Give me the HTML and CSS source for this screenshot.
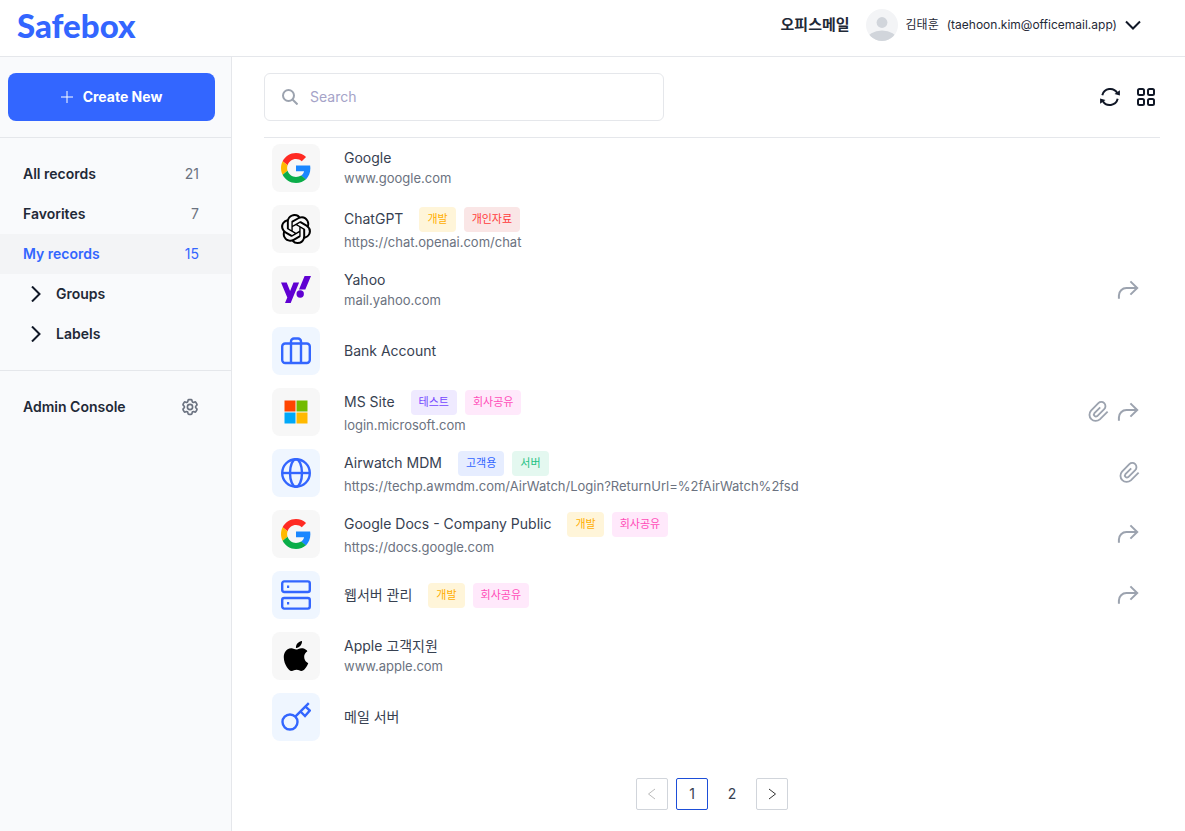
FILE: index.html
```html
<!DOCTYPE html>
<html lang="ko">
<head>
    <meta charset="UTF-8">
    <meta name="viewport" content="width=device-width, initial-scale=1.0">
    <title>Safebox</title>
    <link rel="stylesheet" href="styles.css">
</head>
<body>
    <!-- shared icons -->
    <svg class="sprite" aria-hidden="true">
        <symbol id="google" viewBox="0 0 48 48">
            <path fill="#ff2a23" d="M24 9.5c3.54 0 6.71 1.22 9.21 3.6l6.85-6.85C35.9 2.38 30.47 0 24 0 14.62 0 6.51 5.38 2.56 13.22l7.98 6.19C12.43 13.72 17.74 9.5 24 9.5z"/>
            <path fill="#1a87ff" d="M46.98 24.55c0-1.57-.15-3.09-.38-4.55H24v9.02h12.94c-.58 2.96-2.26 5.48-4.78 7.18l7.73 6c4.51-4.18 7.09-10.36 7.09-17.65z"/>
            <path fill="#ffb900" d="M10.53 28.59c-.48-1.45-.76-2.99-.76-4.59s.27-3.14.76-4.59l-7.98-6.19C.92 16.46 0 20.12 0 24c0 3.88.92 7.54 2.56 10.78l7.97-6.19z"/>
            <path fill="#0aad49" d="M24 48c6.48 0 11.93-2.13 15.89-5.81l-7.73-6c-2.15 1.45-4.92 2.3-8.16 2.3-6.26 0-11.57-4.22-13.47-9.91l-7.98 6.19C6.51 42.62 14.62 48 24 48z"/>
        </symbol>
        <symbol id="share" viewBox="0 0 24 24">
            <path class="line" d="M2.9 20.8v-3.3a7.5 7.5 0 0 1 7.5-7.5H21M14.4 3.4 21.2 10l-6.8 6.6"/>
        </symbol>
        <symbol id="clip" viewBox="0 0 24 24">
            <path class="line" d="M22.5 11.5 14 20a6.8 6.8 0 0 1-9.6-9.6l8-8a4.5 4.5 0 0 1 6.4 6.4l-7.6 7.6a2.2 2.2 0 0 1-3.1-3.1l6.3-6.3"/>
        </symbol>
    </svg>

    <header class="header">
        <a class="logo" href="#">Safebox</a>
        <div class="account">
            <span class="company">오피스메일</span>
            <button class="user" type="button">
                <svg class="avatar" viewBox="0 0 32 32">
                    <clipPath id="face"><circle cx="16" cy="16" r="16"/></clipPath>
                    <g clip-path="url(#face)">
                        <rect width="32" height="32" fill="#f3f4f6"/>
                        <circle cx="16" cy="13.5" r="5.4" fill="#d1d5db"/>
                        <ellipse cx="16" cy="31" rx="15" ry="9.5" fill="#d1d5db"/>
                    </g>
                </svg>
                <span>김태훈</span>
                <span class="email">(taehoon.kim@officemail.app)</span>
                <svg class="chevron" viewBox="0 0 16 16"><path d="M1 4.5l7 7 7-7"/></svg>
            </button>
        </div>
    </header>

    <div class="layout">
        <aside class="sidebar">
            <div class="create">
                <button class="create-btn" type="button">
                    <svg viewBox="0 0 12 12"><path d="M6 0v12M0 6h12"/></svg>
                    Create New
                </button>
            </div>
            <nav class="menu">
                <a href="#">All records <span class="count">21</span></a>
                <a href="#">Favorites <span class="count">7</span></a>
                <a href="#" class="active">My records <span class="count">15</span></a>
                <a href="#" class="fold"><svg viewBox="0 0 16 16"><path d="M4 .5 11.5 8 4 15.5"/></svg>Groups</a>
                <a href="#" class="fold"><svg viewBox="0 0 16 16"><path d="M4 .5 11.5 8 4 15.5"/></svg>Labels</a>
            </nav>
            <nav class="menu admin">
                <a href="#">Admin Console
                    <svg class="gear" viewBox="1 1 22 22">
                        <path d="M9.594 3.94c.09-.542.56-.94 1.11-.94h2.593c.55 0 1.02.398 1.11.94l.213 1.281c.063.374.313.686.645.87.074.04.147.083.22.127.324.196.72.257 1.075.124l1.217-.456a1.125 1.125 0 011.37.49l1.296 2.247a1.125 1.125 0 01-.26 1.431l-1.003.827c-.293.24-.438.613-.431.992a6.759 6.759 0 010 .255c-.007.378.138.75.43.99l1.005.828c.424.35.534.954.26 1.43l-1.298 2.247a1.125 1.125 0 01-1.369.491l-1.217-.456c-.355-.133-.75-.072-1.076.124a6.57 6.57 0 01-.22.128c-.331.183-.581.495-.644.869l-.213 1.28c-.09.543-.56.941-1.11.941h-2.594c-.55 0-1.02-.398-1.11-.94l-.213-1.281c-.062-.374-.312-.686-.644-.87a6.52 6.52 0 01-.22-.127c-.325-.196-.72-.257-1.076-.124l-1.217.456a1.125 1.125 0 01-1.369-.49l-1.297-2.247a1.125 1.125 0 01.26-1.431l1.004-.827c.292-.24.437-.613.43-.992a6.932 6.932 0 010-.255c.007-.378-.138-.75-.43-.99l-1.004-.828a1.125 1.125 0 01-.26-1.43l1.297-2.247a1.125 1.125 0 011.37-.491l1.216.456c.356.133.751.072 1.076-.124.072-.044.146-.087.22-.128.332-.183.582-.495.644-.869l.214-1.281z"/>
                        <circle cx="12" cy="12" r="3.2"/>
                    </svg>
                </a>
            </nav>
        </aside>

        <main class="main">
            <div class="toolbar">
                <label class="search">
                    <svg viewBox="0 0 16 16"><circle cx="6.5" cy="6.5" r="5.5"/><path d="M10.5 10.5l5 5"/></svg>
                    <input type="text" placeholder="Search" aria-label="Search">
                </label>
                <div class="tools">
                    <button type="button" aria-label="Refresh">
                        <svg viewBox="0 0 20 20">
                            <path class="line" d="M2.3 8.2A8.2 8.2 0 0 1 17.3 6M17.7 11.8A8.2 8.2 0 0 1 2.7 14"/>
                            <path d="M19.9 3.2v5.4l-5.4-1.5zM.1 16.8v-5.4l5.4 1.5z"/>
                        </svg>
                    </button>
                    <button type="button" aria-label="Grid view">
                        <svg viewBox="0 0 20 20">
                            <g class="line">
                                <rect x="2" y="2" width="6" height="6" rx="1.5"/><rect x="12" y="2" width="6" height="6" rx="1.5"/>
                                <rect x="2" y="12" width="6" height="6" rx="1.5"/><rect x="12" y="12" width="6" height="6" rx="1.5"/>
                            </g>
                        </svg>
                    </button>
                </div>
            </div>

            <ul class="records">
                <li>
                    <span class="tile"><svg><use href="#google"/></svg></span>
                    <div class="info">
                        <div class="title">Google</div>
                        <div class="url">www.google.com</div>
                    </div>
                </li>
                <li>
                    <span class="tile">
                        <svg viewBox="0 0 24 24"><path d="M22.2819 9.8211a5.9847 5.9847 0 0 0-.5157-4.9108 6.0462 6.0462 0 0 0-6.5098-2.9A6.0651 6.0651 0 0 0 4.9807 4.1818a5.9847 5.9847 0 0 0-3.9977 2.9 6.0462 6.0462 0 0 0 .7427 7.0966 5.98 5.98 0 0 0 .511 4.9107 6.051 6.051 0 0 0 6.5146 2.9001A5.9847 5.9847 0 0 0 13.2599 24a6.0557 6.0557 0 0 0 5.7718-4.2058 5.9894 5.9894 0 0 0 3.9977-2.9001 6.0557 6.0557 0 0 0-.7475-7.0729zm-9.022 12.6081a4.4755 4.4755 0 0 1-2.8764-1.0408l.1419-.0804 4.7783-2.7582a.7948.7948 0 0 0 .3927-.6813v-6.7369l2.02 1.1686a.071.071 0 0 1 .038.052v5.5826a4.504 4.504 0 0 1-4.4945 4.4944zm-9.6607-4.1254a4.4708 4.4708 0 0 1-.5346-3.0137l.142.0852 4.783 2.7582a.7712.7712 0 0 0 .7806 0l5.8428-3.3685v2.3324a.0804.0804 0 0 1-.0332.0615L9.74 19.9502a4.4992 4.4992 0 0 1-6.1408-1.6464zM2.3408 7.8956a4.485 4.485 0 0 1 2.3655-1.9728V11.6a.7664.7664 0 0 0 .3879.6765l5.8144 3.3543-2.0201 1.1685a.0757.0757 0 0 1-.071 0l-4.8303-2.7865A4.504 4.504 0 0 1 2.3408 7.872zm16.5963 3.8558L13.1038 8.364 15.1192 7.2a.0757.0757 0 0 1 .071 0l4.8303 2.7913a4.4944 4.4944 0 0 1-.6765 8.1042v-5.6772a.79.79 0 0 0-.407-.667zm2.0107-3.0231l-.142-.0852-4.7735-2.7818a.7759.7759 0 0 0-.7854 0L9.409 9.2297V6.8974a.0662.0662 0 0 1 .0284-.0615l4.8303-2.7866a4.4992 4.4992 0 0 1 6.6802 4.66zM8.3065 12.863l-2.02-1.1638a.0804.0804 0 0 1-.038-.0567V6.0742a4.4992 4.4992 0 0 1 7.3757-3.4537l-.142.0805L8.704 5.459a.7948.7948 0 0 0-.3927.6813zm1.0976-2.3654l2.602-1.4998 2.6069 1.4998v2.9994l-2.5974 1.4997-2.6067-1.4997Z"/></svg>
                    </span>
                    <div class="info">
                        <div class="title">ChatGPT <span class="tags"><span class="tag yellow">개발</span><span class="tag red">개인자료</span></span></div>
                        <div class="url">https://chat.openai.com/chat</div>
                    </div>
                </li>
                <li>
                    <span class="tile">
                        <svg viewBox="0 0 30 30" fill="#6001d2"><path d="M0 7.5h5.7l3.4 8.6 3.4-8.6h5.6L9.7 28H4l2.3-5.5zM23.6 1H30l-5.7 13.6h-6.3z"/><circle cx="19.2" cy="19" r="3.7"/></svg>
                    </span>
                    <div class="info">
                        <div class="title">Yahoo</div>
                        <div class="url">mail.yahoo.com</div>
                    </div>
                    <div class="marks"><svg class="share"><use href="#share"/></svg></div>
                </li>
                <li>
                    <span class="tile blue">
                        <svg viewBox="0 0 30 30"><rect x="1.2" y="7.5" width="27.6" height="19.5" rx="3"/><path d="M10 27V5.5a3 3 0 0 1 3-3h4a3 3 0 0 1 3 3V27"/></svg>
                    </span>
                    <div class="info">
                        <div class="title">Bank Account</div>
                    </div>
                </li>
                <li>
                    <span class="tile">
                        <svg viewBox="0 0 30 30"><path fill="#ff4500" d="M3.5 3.5h11v11h-11z"/><path fill="#72bb00" d="M15.5 3.5h11v11h-11z"/><path fill="#00a8f8" d="M3.5 15.5h11v11h-11z"/><path fill="#ffb900" d="M15.5 15.5h11v11h-11z"/></svg>
                    </span>
                    <div class="info">
                        <div class="title">MS Site <span class="tags"><span class="tag purple">테스트</span><span class="tag pink">회사공유</span></span></div>
                        <div class="url">login.microsoft.com</div>
                    </div>
                    <div class="marks"><svg class="clip"><use href="#clip"/></svg><svg class="share"><use href="#share"/></svg></div>
                </li>
                <li>
                    <span class="tile blue">
                        <svg viewBox="0 0 30 30"><circle cx="15" cy="15" r="13.8"/><ellipse cx="15" cy="15" rx="6" ry="13.8"/><path d="M1 15h28"/></svg>
                    </span>
                    <div class="info">
                        <div class="title">Airwatch MDM <span class="tags"><span class="tag navy">고객용</span><span class="tag green">서버</span></span></div>
                        <div class="url">https://techp.awmdm.com/AirWatch/Login?ReturnUrl=%2fAirWatch%2fsd</div>
                    </div>
                    <div class="marks"><svg class="clip"><use href="#clip"/></svg></div>
                </li>
                <li>
                    <span class="tile"><svg><use href="#google"/></svg></span>
                    <div class="info">
                        <div class="title">Google Docs - Company Public <span class="tags"><span class="tag yellow">개발</span><span class="tag pink">회사공유</span></span></div>
                        <div class="url">https://docs.google.com</div>
                    </div>
                    <div class="marks"><svg class="share"><use href="#share"/></svg></div>
                </li>
                <li>
                    <span class="tile blue">
                        <svg viewBox="0 0 30 30"><rect x="1.2" y="1.4" width="27.6" height="10.6" rx="2"/><rect x="1.2" y="18" width="27.6" height="10.6" rx="2"/><path d="M6 6.7h2.2M6 23.300h2.2"/></svg>
                    </span>
                    <div class="info">
                        <div class="title">웹서버 관리 <span class="tags"><span class="tag yellow">개발</span><span class="tag pink">회사공유</span></span></div>
                    </div>
                    <div class="marks"><svg class="share"><use href="#share"/></svg></div>
                </li>
                <li>
                    <span class="tile">
                        <svg viewBox="0 0 24 24"><path d="M12.152 6.896c-.948 0-2.415-1.078-3.96-1.04-2.04.027-3.91 1.183-4.961 3.014-2.117 3.675-.546 9.103 1.519 12.09 1.013 1.454 2.208 3.09 3.792 3.039 1.52-.065 2.09-.987 3.935-.987 1.831 0 2.35.987 3.96.948 1.637-.026 2.676-1.48 3.676-2.948 1.156-1.688 1.636-3.325 1.662-3.415-.039-.013-3.182-1.221-3.22-4.857-.026-3.04 2.48-4.494 2.597-4.559-1.429-2.09-3.623-2.324-4.39-2.376-2-.156-3.675 1.09-4.61 1.09zM15.53 3.83c.843-1.012 1.4-2.427 1.245-3.83-1.207.052-2.662.805-3.532 1.818-.78.896-1.454 2.338-1.273 3.714 1.338.104 2.715-.688 3.559-1.701"/></svg>
                    </span>
                    <div class="info">
                        <div class="title">Apple 고객지원</div>
                        <div class="url">www.apple.com</div>
                    </div>
                </li>
                <li>
                    <span class="tile blue">
                        <svg viewBox="0 0 30 30"><circle cx="9" cy="20" r="7.5"/><path d="M14.3 14.7 27.8 1.2M19.5 9.5l4.5 4.5 4.8-5.4-4.3-3.9"/></svg>
                    </span>
                    <div class="info">
                        <div class="title">메일 서버</div>
                    </div>
                </li>
            </ul>

            <nav class="pages" aria-label="Pages">
                <button type="button" disabled aria-label="Previous"><svg viewBox="0 0 12 12"><path d="M9 1 2.500 6 9 11"/></svg></button>
                <button type="button" class="current">1</button>
                <button type="button" class="plain">2</button>
                <button type="button" aria-label="Next"><svg viewBox="0 0 12 12"><path d="M3 1l6.500 5L3 11"/></svg></button>
            </nav>
        </main>
    </div>
</body>
</html>
```
FILE: styles.css
```css
:root {
    --primary: #3366ff;
    --border: #e5e7eb;
    --dark: #1f2937;
    --text: #374151;
    --muted: #6b7280;
    --light: #9ca3af;
}

* {
    box-sizing: border-box;
}

body {
    margin: 0;
    min-height: 100vh;
    display: flex;
    flex-direction: column;
    font-family: "Inter", "Noto Sans CJK KR", sans-serif;
    font-size: 14px;
    line-height: 20px;
    color: var(--text);
    background: #fff;
}

a {
    color: inherit;
    text-decoration: none;
}

button {
    padding: 0;
    border: none;
    background: none;
    font: inherit;
    color: inherit;
    cursor: pointer;
}

svg {
    display: block;
    flex: none;
}

.sprite {
    display: none;
}

.line {
    fill: none;
    stroke: currentColor;
    stroke-width: 2;
}

/* header */
.header {
    display: flex;
    align-items: center;
    justify-content: space-between;
    height: 57px;
    padding: 0 44px 7px 17px;
    border-bottom: 1px solid var(--border);
}

.logo {
    font-family: "Lato", sans-serif;
    font-size: 33px;
    line-height: 40px;
    font-weight: 900;
    color: var(--primary);
}

.account,
.user {
    display: flex;
    align-items: center;
    color: var(--dark);
}

.company {
    margin-right: 16px;
    font-size: 15px;
    font-weight: 700;
}

.user {
    gap: 8px;
    font-size: 12px;
}

.avatar {
    width: 32px;
    height: 32px;
}

.chevron {
    width: 16px;
    height: 16px;
    fill: none;
    stroke: #111827;
    stroke-width: 2;
}

/* sidebar */
.layout {
    flex: 1;
    display: flex;
}

.sidebar {
    flex: none;
    width: 232px;
    background: #f9fafc;
    border-right: 1px solid var(--border);
}

.create {
    padding: 16px 16px 16px 8px;
    border-bottom: 1px solid var(--border);
}

.create-btn {
    display: flex;
    align-items: center;
    justify-content: center;
    gap: 10px;
    width: 100%;
    height: 48px;
    border-radius: 8px;
    background: var(--primary);
    color: #fff;
    font-weight: 700;
}

.create-btn svg {
    width: 12px;
    height: 12px;
    stroke: #fff;
}

.menu {
    padding: 16px 0;
    border-bottom: 1px solid var(--border);
}

.menu.admin {
    border-bottom: none;
}

.menu a {
    display: flex;
    align-items: center;
    justify-content: space-between;
    height: 40px;
    padding: 0 32px 0 23px;
    font-weight: 600;
    color: var(--dark);
}

.count {
    font-weight: 400;
    color: var(--muted);
}

.menu .active {
    background: #f3f4f6;
}

.menu .active,
.active .count {
    color: var(--primary);
}

.menu .fold {
    justify-content: flex-start;
    gap: 12px;
    padding-left: 28px;
}

.fold svg {
    width: 16px;
    height: 16px;
    fill: none;
    stroke: #111827;
    stroke-width: 2;
}

.gear {
    width: 18px;
    height: 18px;
    fill: none;
    stroke: var(--muted);
    stroke-width: 2;
}

/* records */
.main {
    flex: 1;
    min-width: 0;
    padding: 16px 25px 16px 32px;
}

.toolbar {
    display: flex;
    align-items: center;
    justify-content: space-between;
    padding: 0 4px 16px 0;
    border-bottom: 1px solid var(--border);
}

.search {
    display: flex;
    align-items: center;
    gap: 12px;
    width: 400px;
    height: 48px;
    padding: 0 17px;
    border: 1px solid var(--border);
    border-radius: 6px;
}

.search svg {
    width: 16px;
    height: 16px;
    fill: none;
    stroke: var(--light);
    stroke-width: 2;
}

.search input {
    flex: 1;
    min-width: 0;
    padding: 0;
    border: none;
    outline: none;
    font: inherit;
}

.search input::placeholder {
    color: #a5a3c8;
}

.tools {
    display: flex;
    gap: 16px;
    color: #111827;
}

.tools svg {
    width: 20px;
    height: 20px;
    fill: currentColor;
}

.records {
    display: flex;
    flex-direction: column;
    gap: 13px;
    margin: 0;
    padding: 6px 20px 6px 8px;
    list-style: none;
}

.records li {
    display: flex;
    align-items: center;
    height: 48px;
}

.tile {
    display: flex;
    align-items: center;
    justify-content: center;
    width: 48px;
    height: 48px;
    margin-right: 24px;
    border-radius: 8px;
    background: #f7f7f7;
}

.tile svg {
    width: 30px;
    height: 30px;
}

.tile.blue {
    background: #eff6ff;
}

.tile.blue svg {
    fill: none;
    stroke: var(--primary);
    stroke-width: 2.4;
}

.info {
    flex: 1;
    min-width: 0;
}

.title {
    display: flex;
    align-items: center;
}

.url {
    font-size: 13px;
    color: var(--muted);
}

.tags {
    display: flex;
    gap: 8px;
    margin-left: 16px;
}

.tag {
    padding: 0 8px;
    border-radius: 4px;
    font-size: 11px;
    line-height: 25px;
}

.yellow {
    color: #ffae00;
    background: #fff5d9;
}

.red {
    color: #ff3b3b;
    background: #fae6e6;
}

.purple {
    color: #7546ff;
    background: #efeaff;
}

.pink {
    color: #ff4db8;
    background: #ffe9fb;
}

.navy {
    color: #3366ff;
    background: #e6edff;
}

.green {
    color: #1cc283;
    background: #e4f8f0;
}

.marks {
    display: flex;
    align-items: center;
    gap: 7px;
    color: var(--light);
}

.share {
    width: 24px;
    height: 24px;
}

.clip {
    width: 22px;
    height: 22px;
}

/* pagination */
.pages {
    display: flex;
    justify-content: center;
    gap: 8px;
    padding-top: 31px;
}

.pages button {
    display: flex;
    align-items: center;
    justify-content: center;
    width: 32px;
    height: 32px;
    border: 1px solid #d1d5db;
    border-radius: 2px;
}

.pages .current {
    border-color: #1d4ed8;
}

.pages .plain {
    border-color: transparent;
}

.pages svg {
    width: 12px;
    height: 12px;
    fill: none;
    stroke: #333;
}

.pages button:disabled svg {
    stroke: #bbb;
}
```
